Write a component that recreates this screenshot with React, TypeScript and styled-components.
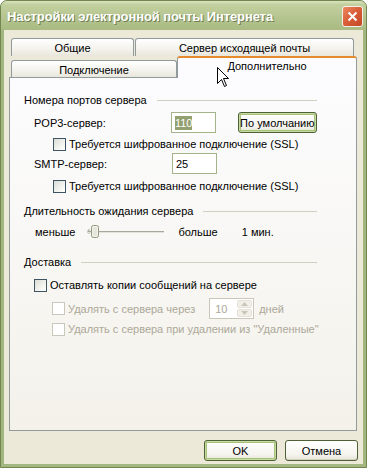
import React from 'react';
import styled, { createGlobalStyle } from 'styled-components';

const GlobalStyle = createGlobalStyle`
  html, body {
    margin: 0;
    padding: 0;
    background: #ffffff;
  }
  body {
    font-family: "Liberation Sans", Tahoma, Arial, sans-serif;
    font-size: 11px;
    color: #000000;
  }
`;

const Window = styled.div`
  position: relative;
  display: flex;
  flex-direction: column;
  width: 367px;
  height: 468px;
  box-sizing: border-box;
  border: 1px solid #71874f;
  border-radius: 7px 7px 0 0;
  background: #a4b680;
  overflow: hidden;
`;

const TitleBar = styled.div`
  display: flex;
  align-items: center;
  justify-content: space-between;
  height: 29px;
  padding: 2px 3px 0 6px;
  box-sizing: border-box;
  background: linear-gradient(
    #dbe4bf 0%,
    #c2d09f 12%,
    #b6c590 55%,
    #a9ba83 100%
  );
`;

const Title = styled.span`
  font-family: "Liberation Sans", Arial, sans-serif;
  font-weight: bold;
  font-size: 13px;
  color: #ffffff;
  text-shadow: 1px 1px 0 #6f7f50;
  letter-spacing: -0.1px;
`;

const CloseButton = styled.div`
  width: 19px;
  height: 19px;
  border: 1px solid #f4efe6;
  border-radius: 3px;
  background: linear-gradient(135deg, #ec8a64 0%, #d9603a 45%, #c24726 100%);
  display: flex;
  align-items: center;
  justify-content: center;
`;

const Body = styled.div`
  flex: 1;
  display: flex;
  flex-direction: column;
  margin: 0 3px 3px;
  padding: 8px 6px 0 5px;
  background: #ece9d8;
`;

const TabStrip = styled.div`
  display: flex;
  flex-direction: column;
  margin-left: 2px;
`;

const TabRow = styled.div<{ $gap?: number }>`
  display: flex;
  align-items: flex-end;
  gap: ${({ $gap }) => $gap ?? 0}px;
`;

const Tab = styled.div<{ $width: number; $height: number }>`
  width: ${({ $width }) => $width}px;
  height: ${({ $height }) => $height}px;
  box-sizing: border-box;
  border: 1px solid #919b9c;
  border-bottom: none;
  border-radius: 3px 3px 0 0;
  background: linear-gradient(#ffffff, #f3f2ec 60%, #e9e7dc);
  display: flex;
  align-items: center;
  justify-content: center;
  padding-top: 1px;
`;

const ActiveTab = styled.div`
  position: relative;
  z-index: 1;
  width: 180px;
  height: 22px;
  margin: 0 0 -1px;
  box-sizing: border-box;
  border: 1px solid #919b9c;
  border-top: 2px solid #e68b2c;
  border-bottom: none;
  border-radius: 3px 3px 0 0;
  background: #fcfcfe;
  display: flex;
  justify-content: center;
  padding-top: 2px;
`;

const Panel = styled.div`
  height: 354px;
  box-sizing: border-box;
  border: 1px solid #919b9c;
  background: linear-gradient(#fcfcfe, #f7f6f2 60%, #f3f1ea);
  display: flex;
  flex-direction: column;
  padding: 0 39px 0 14px;
`;

const GroupHeader = styled.div<{ $top: number }>`
  display: flex;
  align-items: center;
  gap: 10px;
  height: 14px;
  margin-top: ${({ $top }) => $top}px;

  &::after {
    content: '';
    flex: 1;
    height: 1px;
    background: #d0d0bf;
  }
`;

const Row = styled.div<{ $top: number; $indent: number; $height?: number }>`
  display: flex;
  align-items: center;
  height: ${({ $height }) => $height ?? 14}px;
  margin-top: ${({ $top }) => $top}px;
  padding-left: ${({ $indent }) => $indent}px;
`;

const FieldLabel = styled.span`
  width: 138px;
`;

const TextBox = styled.div`
  width: 45px;
  height: 21px;
  box-sizing: border-box;
  border: 1px solid #a4b38a;
  background: #ffffff;
  display: flex;
  align-items: center;
  padding-left: 3px;
`;

const Selected = styled.span`
  background: #93a070;
  color: #ffffff;
  padding: 1px 0;
`;

const Button = styled.div<{ $width: number; $default?: boolean; $left?: number }>`
  width: ${({ $width }) => $width}px;
  height: 21px;
  margin-left: ${({ $left }) => $left ?? 0}px;
  box-sizing: border-box;
  border: 1px solid #4f5f36;
  border-radius: 3px;
  background: linear-gradient(#ffffff, #f5f4ee 70%, #e6e4d8);
  box-shadow: ${({ $default }) =>
    $default ? 'inset 0 0 0 1px #c6dba0, inset 0 0 0 2px #a7c27a' : 'inset 0 -1px 0 #d6d3c5'};
  display: flex;
  align-items: center;
  justify-content: center;
`;

const Check = styled.div<{ $disabled?: boolean }>`
  width: 13px;
  height: 13px;
  box-sizing: border-box;
  border: 1px solid ${({ $disabled }) => ($disabled ? '#cac8bb' : '#3e5462')};
  background: ${({ $disabled }) =>
    $disabled ? '#ffffff' : 'linear-gradient(135deg, #dcdcd6, #f6f6f3 70%, #ffffff)'};
  margin-right: 3px;
  flex-shrink: 0;
`;

const Text = styled.span<{ $disabled?: boolean; $left?: number }>`
  color: ${({ $disabled }) => ($disabled ? '#aca899' : '#000000')};
  margin-left: ${({ $left }) => $left ?? 0}px;
  white-space: nowrap;
`;

const SpinBox = styled.div`
  width: 45px;
  height: 21px;
  box-sizing: border-box;
  border: 1px solid #c9c7ba;
  background: #ffffff;
  display: flex;
  align-items: stretch;
  margin-left: 14px;
  color: #aca899;
`;

const SpinValue = styled.span`
  flex: 1;
  display: flex;
  align-items: center;
  padding-left: 5px;
`;

const SpinButtons = styled.div`
  width: 15px;
  display: flex;
  flex-direction: column;
  padding: 1px;
  gap: 1px;
`;

const SpinArrow = styled.div`
  flex: 1;
  border: 1px solid #e4e2d8;
  border-radius: 2px;
  background: #f1efe7;
  display: flex;
  align-items: center;
  justify-content: center;
`;

const Footer = styled.div`
  display: flex;
  justify-content: flex-end;
  gap: 8px;
  margin-top: 9px;
  margin-right: -1px;
`;

const Cursor = styled.svg`
  position: absolute;
  left: 216px;
  top: 66px;
  z-index: 5;
`;

const SliderTrack = styled.svg`
  margin-left: 12px;
  flex-shrink: 0;
`;

const Slider = () => (
  <SliderTrack width="78" height="20" viewBox="0 0 78 20">
    <path d="M3 8 L1 8 L1 11 L3 11" stroke="#a7a79b" fill="none" />
    <rect x="1" y="9" width="76" height="1" fill="#a9a89c" />
    <rect x="1" y="10" width="76" height="1" fill="#e3e2da" />
    <rect x="4.5" y="3.5" width="7" height="12" rx="2" fill="#f4f4ef" stroke="#8f9878" />
    <rect x="6" y="5" width="4" height="9" fill="#e7e6dd" />
  </SliderTrack>
);

const App: React.FC = () => {
  return (
    <>
      <GlobalStyle />
      <Window>
        <TitleBar>
          <Title>Настройки электронной почты Интернета</Title>
          <CloseButton>
            <svg width="11" height="11" viewBox="0 0 11 11">
              <path d="M1.5 1.5 L9.5 9.5 M9.5 1.5 L1.5 9.5" stroke="#ffffff" strokeWidth="2" />
            </svg>
          </CloseButton>
        </TitleBar>
        <Body>
          <TabStrip>
            <TabRow $gap={1}>
              <Tab $width={123} $height={18}>Общие</Tab>
              <Tab $width={219} $height={18}>Сервер исходящей почты</Tab>
            </TabRow>
            <TabRow>
              <Tab $width={166} $height={17}>Подключение</Tab>
              <ActiveTab>Дополнительно</ActiveTab>
            </TabRow>
          </TabStrip>
          <Panel>
            <GroupHeader $top={15}>Номера портов сервера</GroupHeader>
            <Row $top={5} $indent={10} $height={21}>
              <FieldLabel>POP3-сервер:</FieldLabel>
              <TextBox>
                <Selected>110</Selected>
              </TextBox>
              <Button $width={80} $left={22} $default>
                По умолчанию
              </Button>
            </Row>
            <Row $top={4} $indent={29}>
              <Check />
              <Text>Требуется шифрованное подключение (SSL)</Text>
            </Row>
            <Row $top={2} $indent={10} $height={21}>
              <FieldLabel>SMTP-сервер:</FieldLabel>
              <TextBox>25</TextBox>
            </Row>
            <Row $top={5} $indent={29}>
              <Check />
              <Text>Требуется шифрованное подключение (SSL)</Text>
            </Row>

            <GroupHeader $top={11}>Длительность ожидания сервера</GroupHeader>
            <Row $top={4} $indent={11} $height={20}>
              <Text>меньше</Text>
              <Slider />
              <Text $left={13}>больше</Text>
              <Text $left={24}>1 мин.</Text>
            </Row>

            <GroupHeader $top={13}>Доставка</GroupHeader>
            <Row $top={9} $indent={10}>
              <Check />
              <Text>Оставлять копии сообщений на сервере</Text>
            </Row>
            <Row $top={6} $indent={28} $height={21}>
              <Check $disabled />
              <Text $disabled>Удалять с сервера через</Text>
              <SpinBox>
                <SpinValue>10</SpinValue>
                <SpinButtons>
                  <SpinArrow>
                    <svg width="7" height="4" viewBox="0 0 7 4">
                      <path d="M0 4 L3.5 0 L7 4 Z" fill="#c9c7ba" />
                    </svg>
                  </SpinArrow>
                  <SpinArrow>
                    <svg width="7" height="4" viewBox="0 0 7 4">
                      <path d="M0 0 L3.5 4 L7 0 Z" fill="#c9c7ba" />
                    </svg>
                  </SpinArrow>
                </SpinButtons>
              </SpinBox>
              <Text $disabled $left={5}>дней</Text>
            </Row>
            <Row $top={3} $indent={28}>
              <Check $disabled />
              <Text $disabled>Удалять с сервера при удалении из "Удаленные"</Text>
            </Row>
          </Panel>
          <Footer>
            <Button $width={73} $default>OK</Button>
            <Button $width={73}>Отмена</Button>
          </Footer>
        </Body>
        <Cursor width="13" height="21" viewBox="0 0 13 21">
          <path
            d="M0.5 0.5 L0.5 16.5 L4.5 12.5 L7.5 19.5 L9.5 18.5 L6.5 11.5 L11.5 11.5 Z"
            fill="#ffffff"
            stroke="#000000"
            strokeWidth="1"
          />
        </Cursor>
      </Window>
    </>
  );
};

export default App;
